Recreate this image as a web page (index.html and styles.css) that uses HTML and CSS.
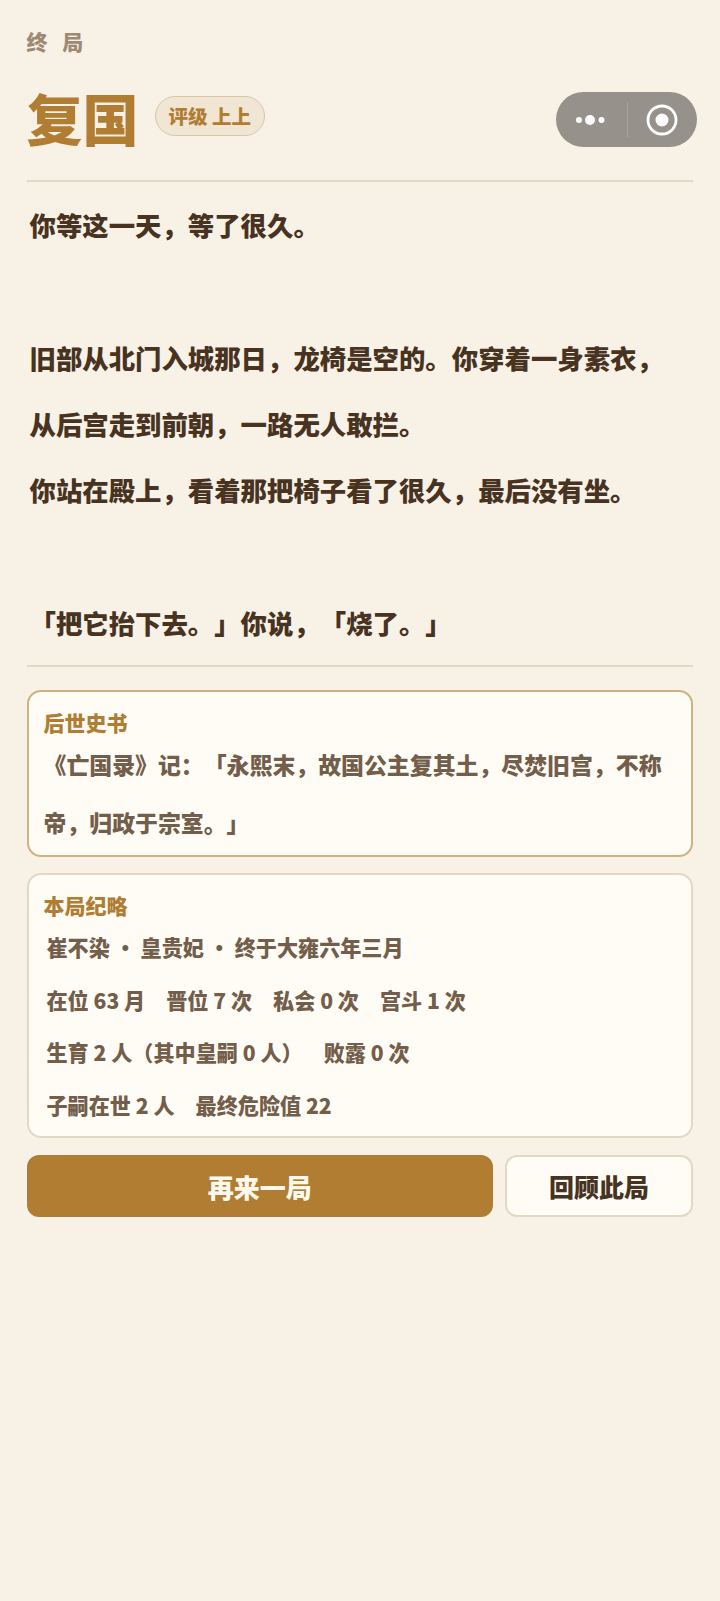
FILE: index.html
```html
<!doctype html>
<html>
<head>
<meta charset="utf-8">
<title>终局</title>
<link rel="stylesheet" href="styles.css">
</head>

<body>
<div class="page">
	<div class="eyebrow">终 局</div>
	<div class="head">
		<h1 class="ending">复国</h1>
		<span class="grade">评级 上上</span>
	</div>
	<div class="story">
		<p>你等这一天，等了很久。</p>
		<p class="blank"></p>
		<p>旧部从北门入城那日，龙椅是空的。你穿着一身素衣，</p>
		<p>从后宫走到前朝，一路无人敢拦。</p>
		<p>你站在殿上，看着那把椅子看了很久，最后没有坐。</p>
		<p class="blank"></p>
		<p>「把它抬下去。」你说，「烧了。」</p>
	</div>
	<div class="card card-gold">
		<div class="card-title">后世史书</div>
		<div class="history">《亡国录》记：「永熙末，故国公主复其土，尽焚旧宫，不称帝，归政于宗室。」</div>
	</div>
	<div class="card card-notes">
		<div class="card-title">本局纪略</div>
		<ul class="notes">
			<li>崔不染 · 皇贵妃 · 终于大雍六年三月</li>
			<li><span>在位 63 月</span><span>晋位 7 次</span><span>私会 0 次</span><span>宫斗 1 次</span></li>
			<li><span>生育 2 人（其中皇嗣 0 人）</span><span>败露 0 次</span></li>
			<li><span>子嗣在世 2 人</span><span>最终危险值 22</span></li>
		</ul>
	</div>
	<div class="actions">
		<button class="btn btn-main">再来一局</button>
		<button class="btn btn-plain">回顾此局</button>
	</div>
</div>

<!-- 小程序胶囊 -->
<div class="capsule">
	<svg class="capsule-more" width="32" height="12" viewBox="0 0 32 12"><circle cx="4" cy="6" r="3" fill="#fff"/><circle cx="15" cy="6" r="5" fill="#fff"/><circle cx="26.500" cy="6" r="3" fill="#fff"/></svg>
	<i class="capsule-line"></i>
	<svg class="capsule-close" width="32" height="32" viewBox="0 0 32 32"><circle cx="16" cy="16" r="14" fill="none" stroke="#fff" stroke-width="2.800"/><circle cx="16" cy="16" r="6.500" fill="#fff"/></svg>
</div>
</body>
</html>
```

FILE: styles.css
```css
* {margin:0; padding:0; list-style:none; box-sizing:border-box;}

body {background:#f8f1e6; font-family:"Noto Sans CJK SC", "Noto Sans", sans-serif; color:#47331f; text-spacing-trim:space-all; font-feature-settings:"palt" 0, "chws" 0;}

.page {padding:26px 27px 0 26.500px; min-height:1601px;}

.eyebrow {font-size:21px; line-height:30px; font-weight:900; color:#9c8a74; letter-spacing:5px;}

.head {display:flex; align-items:center; gap:16px; height:103px; margin-top:21px; padding-bottom:24px;}
.ending {font-size:56px; line-height:60px; font-weight:900; color:#b07d33;}
.grade {height:40px; padding:0 13px; line-height:37px; font-size:19.500px; font-weight:900; color:#b07d33; background:#f1e5d4; border:1px solid #d9c6a5; border-radius:21px; margin-bottom:2px;}

.story {border-top:2px solid #e3d8c4; border-bottom:2px solid #e3d8c4; padding:10px 3px 9px;}
.story p {font-size:26.400px; line-height:66.300px; font-weight:900; color:#47331f; white-space:nowrap;}
.story p.blank {height:66.300px;}

.card {background:#fffcf5; border:2px solid #e3d8c6; border-radius:14px; padding:14px 15px 0; margin-top:16px;}
.card-gold {border-color:#cdb282; margin-top:23px; height:167px;}
.card-notes {padding-bottom:5px;}
.card-title {font-size:21px; line-height:32px; font-weight:900; color:#b07d33;}
.history {font-size:22.900px; line-height:57.500px; font-weight:900; color:#725e4b; margin-top:-2px;}

.notes {margin-top:0;}
.notes li {display:flex; gap:21px; padding-left:3px; font-size:21.120px; line-height:52.500px; font-weight:900; color:#725e4b;}

.actions {display:flex; gap:12px; margin-top:17px;}
.btn {height:62px; font-family:inherit; font-size:26px; font-weight:900; border-radius:12px; border:2px solid #e3d8c6;}
.btn-main {flex:1; background:#b07d33; border-color:#b07d33; color:#fff8ec;}
.btn-plain {width:188px; background:#fffcf5; color:#47331f; font-size:25px;}

.capsule {position:absolute; left:556px; top:92px; width:141px; height:55px; display:flex; align-items:center; background:#96918a; border-radius:28px;}
.capsule-more {margin-left:19px;}
.capsule-line {width:1px; height:35px; background:#aaa59d; margin-left:20px;}
.capsule-close {margin-left:18px;}
```
